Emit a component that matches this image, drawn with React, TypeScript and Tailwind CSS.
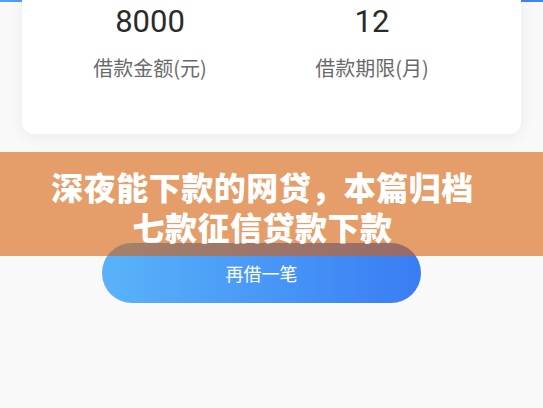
const stats = [
  { value: "8000", label: "借款金额(元)" },
  { value: "12", label: "借款期限(月)" },
]

const App = () => {
  return (
    <div className="relative w-[543px] h-[408px] overflow-hidden bg-[#f9f9fa] font-['Roboto','Noto_Sans_CJK_SC',sans-serif]">
      {/* header gradient edge peeking out behind the card */}
      <div className="h-[2px] w-full bg-gradient-to-r from-[#4f9ef7] to-[#3d84f5]"></div>

      <div className="relative mx-[22px] -mt-[14px] h-[146px] rounded-xl bg-white shadow-[0_3px_14px_rgba(40,60,90,0.07)] pl-[17px] flex">
        {stats.map((s) => (
          <div key={s.label} className="w-[222px] flex flex-col items-center">
            <p className="mt-[14px] text-[31px] leading-[40px] text-[#2b2b2b]">{s.value}</p>
            <p className="mt-[12px] text-[20px] leading-[28px] text-[#6a6a6a] font-['Noto_Sans_CJK_SC',sans-serif]">{s.label}</p>
          </div>
        ))}
      </div>

      <div className="mt-[109px] flex justify-center pr-[20px]">
        <button className="w-[319px] h-[60px] rounded-full bg-gradient-to-r from-[#5ab3f9] to-[#3a7cf4] text-white text-[18px] font-['Noto_Sans_CJK_SC',sans-serif]">
          再借一笔
        </button>
      </div>

      {/* article title banner */}
      <div className="absolute left-0 top-[152px] w-full h-[104px] bg-[rgba(215,95,10,0.6)] pt-[14px] pr-[18px] text-center text-white text-[32px] leading-[40px] font-black tracking-[0.5px] font-['Noto_Sans_CJK_SC',sans-serif]">
        <p>深夜能下款的网贷，本篇归档</p>
        <p>七款征信贷款下款</p>
      </div>
    </div>
  )
}

export default App
